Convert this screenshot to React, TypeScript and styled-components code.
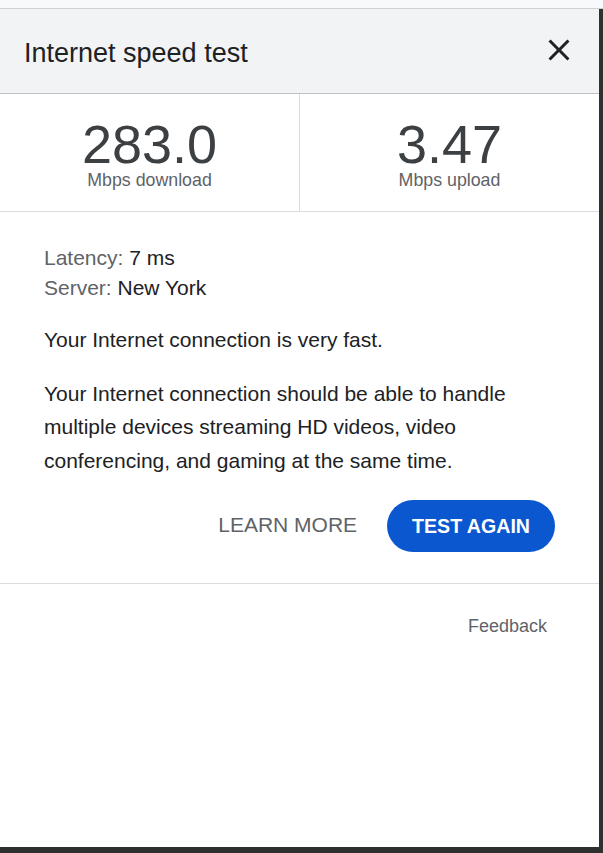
import React from "react";
import styled, { createGlobalStyle } from "styled-components";

const Global = createGlobalStyle`
  html, body { margin: 0; padding: 0; }
  body { font-family: "Liberation Sans", Arial, sans-serif; background: #303030; }
  * { box-sizing: border-box; }
`;

const Page = styled.div`
  width: 603px;
  height: 853px;
  display: flex;
  flex-direction: column;
  background: #303030;
`;

const TopStrip = styled.div`
  height: 9px;
  flex: none;
  background: #f8f9fa;
  border-bottom: 1px solid #cfd1d3;
`;

const Frame = styled.div`
  flex: 1;
  display: flex;
  padding: 0 4px 6px 0;
`;

const Panel = styled.div`
  flex: 1;
  background: #ffffff;
  display: flex;
  flex-direction: column;
`;

const Header = styled.header`
  height: 85px;
  flex: none;
  display: flex;
  align-items: center;
  justify-content: space-between;
  padding: 0 22px 0 24px;
  background: #f1f3f4;
  border-bottom: 1px solid #bfc1c3;
`;

const Title = styled.h1`
  margin: 4px 0 0;
  font-size: 27px;
  font-weight: 400;
  color: #202124;
  line-height: normal;
`;

const CloseButton = styled.button`
  width: 36px;
  height: 36px;
  padding: 0;
  border: none;
  background: transparent;
  color: #202124;
  display: flex;
  align-items: center;
  justify-content: center;
  margin-top: -2px;
`;

const Stats = styled.section`
  display: grid;
  grid-template-columns: 300px 1fr;
  border-bottom: 1px solid #dadce0;
`;

const StatCell = styled.div<{ $divider?: boolean }>`
  display: flex;
  flex-direction: column;
  align-items: center;
  padding: 23px 0 21px;
  border-right: ${(p) => (p.$divider ? "1px solid #dadce0" : "none")};
`;

const StatValue = styled.div`
  font-size: 54px;
  line-height: 54px;
  color: #3c4043;
`;

const StatLabel = styled.div`
  font-size: 17.8px;
  line-height: 19px;
  color: #5f6368;
`;

const Body = styled.section`
  display: flex;
  flex-direction: column;
  padding: 31px 44px 31px;
  border-bottom: 1px solid #dadce0;
  font-size: 21px;
  color: #202124;
`;

const InfoLine = styled.div`
  line-height: 30px;
`;

const InfoLabel = styled.span`
  color: #5f6368;
`;

const Paragraph = styled.p<{ $gap: number }>`
  margin: ${(p) => p.$gap}px 0 0;
  line-height: 33.6px;
`;

const Actions = styled.div`
  margin-top: 23px;
  display: flex;
  justify-content: flex-end;
  align-items: center;
  gap: 30px;
`;

const TextButton = styled.button`
  border: none;
  background: transparent;
  padding: 0;
  font-family: inherit;
  font-size: 21px;
  color: #5f6368;
  text-transform: uppercase;
  margin-top: -2px;
`;

const PrimaryButton = styled.button`
  height: 52px;
  padding: 0 25px;
  border: none;
  border-radius: 26px;
  background: #0b57d0;
  color: #ffffff;
  font-family: inherit;
  font-size: 19.6px;
  font-weight: 700;
  text-transform: uppercase;
`;

const Footer = styled.footer`
  display: flex;
  justify-content: flex-end;
  padding: 32px 52px 0 0;
`;

const FeedbackLink = styled.a`
  font-size: 18px;
  line-height: 20px;
  color: #5f6368;
  text-decoration: none;
`;

export default function App() {
  return (
    <>
      <Global />
      <Page>
        <TopStrip />
        <Frame>
          <Panel>
            <Header>
              <Title>Internet speed test</Title>
              <CloseButton aria-label="Close">
                <svg width="36" height="36" viewBox="0 0 24 24" fill="currentColor">
                  <path d="M19 6.41 17.59 5 12 10.59 6.41 5 5 6.41 10.59 12 5 17.59 6.41 19 12 13.41 17.59 19 19 17.59 13.41 12z" />
                </svg>
              </CloseButton>
            </Header>
            <Stats>
              <StatCell $divider>
                <StatValue>283.0</StatValue>
                <StatLabel>Mbps download</StatLabel>
              </StatCell>
              <StatCell>
                <StatValue>3.47</StatValue>
                <StatLabel>Mbps upload</StatLabel>
              </StatCell>
            </Stats>
            <Body>
              <InfoLine>
                <InfoLabel>Latency:</InfoLabel> 7 ms
              </InfoLine>
              <InfoLine>
                <InfoLabel>Server:</InfoLabel> New York
              </InfoLine>
              <Paragraph $gap={20}>Your Internet connection is very fast.</Paragraph>
              <Paragraph $gap={20}>
                Your Internet connection should be able to handle multiple devices streaming HD videos, video
                conferencing, and gaming at the same time.
              </Paragraph>
              <Actions>
                <TextButton>Learn more</TextButton>
                <PrimaryButton>Test again</PrimaryButton>
              </Actions>
            </Body>
            <Footer>
              <FeedbackLink href="#">Feedback</FeedbackLink>
            </Footer>
          </Panel>
        </Frame>
      </Page>
    </>
  );
}
